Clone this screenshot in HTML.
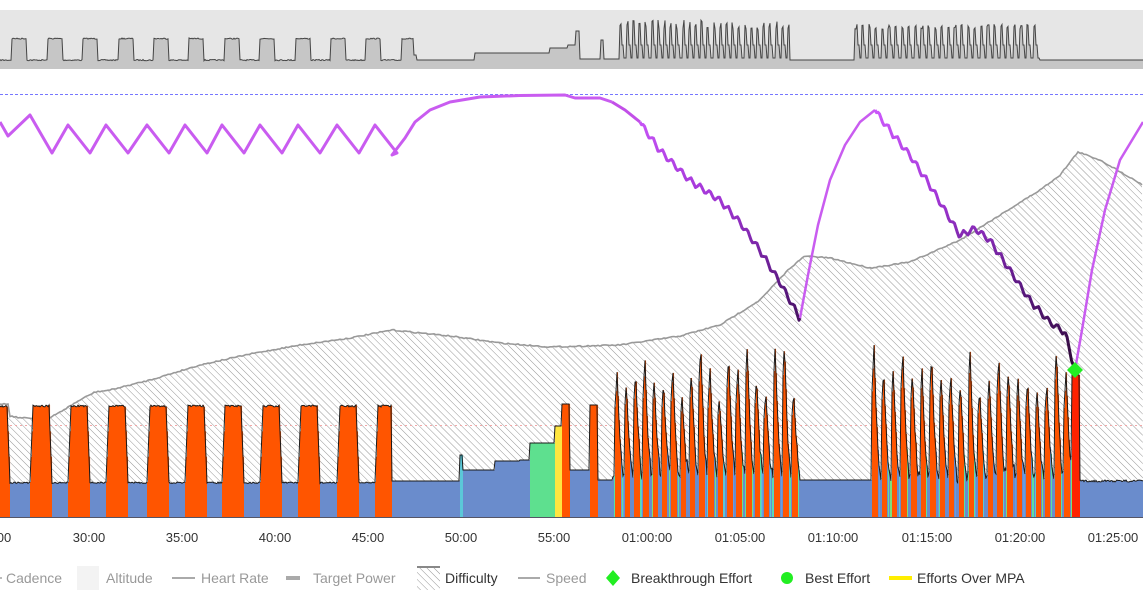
<!DOCTYPE html>
<html><head><meta charset="utf-8">
<style>
html,body{margin:0;padding:0;background:#fff;width:1143px;height:600px;overflow:hidden;font-family:"Liberation Sans",sans-serif}
svg{position:absolute;left:0;top:0}
.ax{font-size:13px;fill:#333;text-anchor:middle}
.lg{font-size:14px;fill:#999}
.lg.a{fill:#333}
</style></head><body>
<svg id="s" width="1143" height="600" xmlns="http://www.w3.org/2000/svg">
<defs>
<pattern id="h" width="5" height="5" patternUnits="userSpaceOnUse" patternTransform="rotate(-45)">
<rect width="5" height="5" fill="#fff"/><line x1="0" y1="0" x2="0" y2="5" stroke="#8a8a8a" stroke-width="0.9"/>
</pattern>
<linearGradient id="wg" gradientUnits="userSpaceOnUse" x1="0" y1="100" x2="0" y2="370">
<stop offset="0" stop-color="#d05cff"/><stop offset="0.35" stop-color="#a437d8"/><stop offset="0.7" stop-color="#5a1880"/><stop offset="1" stop-color="#2a0830"/>
</linearGradient>
</defs>
<rect x="0" y="10" width="1143" height="59" fill="#e6e6e6"/>
<g id="nav"></g>
<line x1="0" y1="94.5" x2="1143" y2="94.5" stroke="#7777ff" stroke-width="1" stroke-dasharray="3,2"/>
<g id="main"></g>
<text class="ax" x="4" y="542">00</text>
<text class="ax" x="89" y="542">30:00</text>
<text class="ax" x="182" y="542">35:00</text>
<text class="ax" x="275" y="542">40:00</text>
<text class="ax" x="368" y="542">45:00</text>
<text class="ax" x="461" y="542">50:00</text>
<text class="ax" x="554" y="542">55:00</text>
<text class="ax" x="647" y="542">01:00:00</text>
<text class="ax" x="740" y="542">01:05:00</text>
<text class="ax" x="833" y="542">01:10:00</text>
<text class="ax" x="927" y="542">01:15:00</text>
<text class="ax" x="1020" y="542">01:20:00</text>
<text class="ax" x="1113" y="542">01:25:00</text>
<line x1="-6" y1="578" x2="2" y2="578" stroke="#bbb" stroke-width="2"/>
<text class="lg" x="6" y="583">Cadence</text>
<rect x="77" y="566" width="22" height="24" fill="#f3f3f3"/>
<text class="lg" x="106" y="583">Altitude</text>
<line x1="172" y1="578" x2="195" y2="578" stroke="#aaa" stroke-width="2"/>
<text class="lg" x="201" y="583">Heart Rate</text>
<line x1="286" y1="578" x2="300" y2="578" stroke="#aaa" stroke-width="4"/>
<text class="lg" x="313" y="583">Target Power</text>
<rect x="417" y="567" width="23" height="23" fill="url(#h)"/>
<line x1="417" y1="567" x2="440" y2="567" stroke="#888" stroke-width="2"/>
<text class="lg a" x="445" y="583">Difficulty</text>
<line x1="518" y1="578" x2="540" y2="578" stroke="#aaa" stroke-width="2"/>
<text class="lg" x="546" y="583">Speed</text>
<polygon points="613,570 620,578 613,586 606,578" fill="#22ee22"/>
<text class="lg a" x="631" y="583">Breakthrough Effort</text>
<circle cx="787" cy="578" r="6" fill="#22ee22"/>
<text class="lg a" x="805" y="583">Best Effort</text>
<line x1="889" y1="578" x2="912" y2="578" stroke="#ffee00" stroke-width="4"/>
<text class="lg a" x="917" y="583">Efforts Over MPA</text>
</svg>
<script>
(function(){
var NS="http://www.w3.org/2000/svg";
function el(p,n,a){var e=document.createElementNS(NS,n);for(var k in a)e.setAttribute(k,a[k]);p.appendChild(e);return e;}
var seed=7;function rnd(){seed=(seed*16807)%2147483647;return (seed-1)/2147483646;}
var W=1143;
var nav=document.getElementById('nav');var N=[];
for(var x=0;x<=W;x++){var y=60;
 if(x<414){for(var i=0;i<12;i++){var s=12+i*35.4;if(x>=s&&x<s+15)y=38+rnd()*1.2;}if(y==60)y=59.5+rnd()*1.2;}
 else if(x<475){y=(x>=414&&x<417)?55:60;}
 else if(x<550)y=53;else if(x<568)y=48;else if(x<576)y=45;else if(x<580)y=31;
 else if(x<620){y=59;if(x>600&&x<604)y=40;}
 else if(x<790){var ph=(x-620)%6.2;y=ph<2?20+rnd()*10:(ph<4?45:58);}
 else if(x<855)y=60;
 else if(x<1040){var ph2=(x-855)%6.6;y=ph2<2.2?24+rnd()*6:(ph2<4.2?45:58);}
 else y=60;
 N.push(y);}
var d="M0,69";for(x=0;x<=W;x++)d+=" L"+x+","+N[x].toFixed(1);d+=" L"+W+",69Z";
el(nav,'path',{d:d,fill:'#c6c6c6'});
d="M0,"+N[0];for(x=1;x<=W;x++)d+=" L"+x+","+N[x].toFixed(1);
el(nav,'path',{d:d,fill:'none',stroke:'#444','stroke-width':1});
var g=document.getElementById('main');
function interp(pts,x){for(var i=0;i<pts.length-1;i++){if(x>=pts[i][0]&&x<=pts[i+1][0]){var t=(x-pts[i][0])/(pts[i+1][0]-pts[i][0]);return pts[i][1]+t*(pts[i+1][1]-pts[i][1]);}}return pts[pts.length-1][1];}
var D=[[0,404],[8,404],[10,416],[22,418],[50,418],[80,400],[95,392],[110,390],[150,380],[200,365],[250,354],[300,345],[350,338],[392,330],[450,336],[500,343],[550,347],[620,345],[680,336],[720,325],[760,300],[790,268],[805,256],[830,258],[870,268],[910,262],[960,240],[1000,215],[1040,190],[1060,175],[1078,152],[1100,160],[1143,185]];
d="M0,517";for(x=0;x<=W;x+=2){var dy=interp(D,x)+(rnd()-0.5)*1.5;d+=" L"+x+","+dy.toFixed(1);}d+=" L"+W+",517Z";
el(g,'path',{d:d,fill:'url(#h)'});
var dl="M0,"+interp(D,0);for(x=2;x<=W;x+=2)dl+=" L"+x+","+(interp(D,x)+(rnd()-0.5)*1.2).toFixed(1);
el(g,'path',{d:dl,fill:'none',stroke:'#999','stroke-width':1.6});
el(g,'line',{x1:0,y1:425.5,x2:W,y2:425.5,stroke:'#f2a8a8','stroke-width':1,'stroke-dasharray':'2,3'});
var P=[],C=[];var BLUE='#6a8ccc',OR='#ff5500';
var starts=[-12,30,68,106,147,185,222,260,298,337,375];
var sp1=[],sp2=[];
for(var c=617;c<800;c+=9.3)sp1.push([c,340+rnd()*60]);
for(c=874;c<1070;c+=9.6)sp2.push([c,345+rnd()*45]);
var MIX=['#5ee0a0','#5bc8d8','#7be07b','#6a9ce0'];
function spikes(arr,x,tr){var y=tr;for(var i=0;i<arr.length;i++){var dx=x-arr[i][0];var f=0;if(dx>=-2&&dx<0)f=1+dx/2*0.35;else if(dx>=0&&dx<7)f=Math.pow(1-dx/7,1.8);if(f>0){var yy=tr-(tr-arr[i][1])*f;if(yy<y)y=yy;}}return y;}
for(x=0;x<=W;x++){var y,col=BLUE;
 if(x<392){y=482+rnd()*1.5;for(var i=0;i<starts.length;i++){var s=starts[i];if(x>=s&&x<s+22){var e=Math.min(x-s,s+22-x);y=e<3?482-(76*e/3):405+rnd()*2;col=OR;}}}
 else if(x<460)y=481;
 else if(x<463){y=455;col='#5bc8d8';}
 else if(x<495)y=470;else if(x<520)y=461;else if(x<530)y=460;
 else if(x<555){y=443;col='#5ee08f';}
 else if(x<562){y=426;col='#ffe640';}
 else if(x<570){y=404;col=OR;}
 else if(x<590)y=470;
 else if(x<598){y=405;col=OR;}
 else if(x<613)y=480;
 else if(x<800){y=spikes(sp1,x,468+rnd()*14);col=y<445?OR:(rnd()<0.4?MIX[Math.floor(rnd()*4)]:BLUE);}
 else if(x<872)y=480;
 else if(x<1072){y=spikes(sp2,x,470+rnd()*14);col=y<445?OR:(rnd()<0.35?MIX[Math.floor(rnd()*4)]:BLUE);}
 else if(x<1080){y=375;col='#ff2200';}
 else y=480+rnd()*2;
 P.push(y);C.push(col);}
for(x=0;x<W;x++)el(g,'rect',{x:x,y:P[x],width:1.05,height:517-P[x],fill:C[x]});
d="M0,"+P[0];for(x=1;x<=W;x++)d+=" L"+x+","+P[x].toFixed(1);
el(g,'path',{d:d,fill:'none',stroke:'#1a1a1a','stroke-width':1});
el(g,'line',{x1:0,y1:517.5,x2:W,y2:517.5,stroke:'#556','stroke-width':1});
var pts=[[0,122],[8,136],[30,115]];
var peaks=[30,68,106,147,185,222,260,298,337,375];
for(i=0;i<peaks.length;i++){pts.push([peaks[i]+22,153]);if(i<peaks.length-1)pts.push([peaks[i+1],125]);}
var up1=[[397,153],[405,138],[415,122],[430,110],[450,102],[480,97],[520,95.5],[565,95],[575,98],[600,98],[612,102],[625,110],[640,122]];
var desc1=[[640,122],[660,150],[690,180],[720,200],[740,222],[760,250],[780,282],[800,318]];
var up2=[[800,318],[808,275],[818,225],[830,180],[845,145],[860,122],[875,110]];
var desc2=[[875,110],[890,130],[910,155],[930,185],[960,235],[975,228],[990,240],[1010,270],[1030,300],[1050,322],[1065,332],[1075,370]];
var up3=[[1075,370],[1082,330],[1092,270],[1105,210],[1120,160],[1143,122]];
function line(p,stroke,w){var s="M"+p[0][0]+","+p[0][1];for(var i=1;i<p.length;i++)s+=" L"+p[i][0].toFixed(1)+","+p[i][1].toFixed(1);el(g,'path',{d:s,fill:'none',stroke:stroke,'stroke-width':w,'stroke-linejoin':'round'});}
function noisy(p){var out=[];for(var x=p[0][0];x<=p[p.length-1][0];x+=1.5){var y=interp(p,x);var ph=(x%9.4)/9.4;y+=(ph<0.5?-ph*14:-(1-ph)*14)+4;out.push([x,y]);}out[0]=p[0];out.push(p[p.length-1]);return out;}
line(pts.concat([[392,155]]).concat(up1.slice(1,11)),'#c95cf0',3);
line(up1.slice(10),'#c24fe8',3);
line(noisy(desc1),'url(#wg)',3);
line(up2,'#c95cf0',2.5);
line(noisy(desc2),'url(#wg)',3);
line(up3,'#c95cf0',2.5);
el(g,'polygon',{points:"1075,362 1083,370 1075,378 1067,370",fill:'#22ee22'});
})();
</script>
</body></html>
